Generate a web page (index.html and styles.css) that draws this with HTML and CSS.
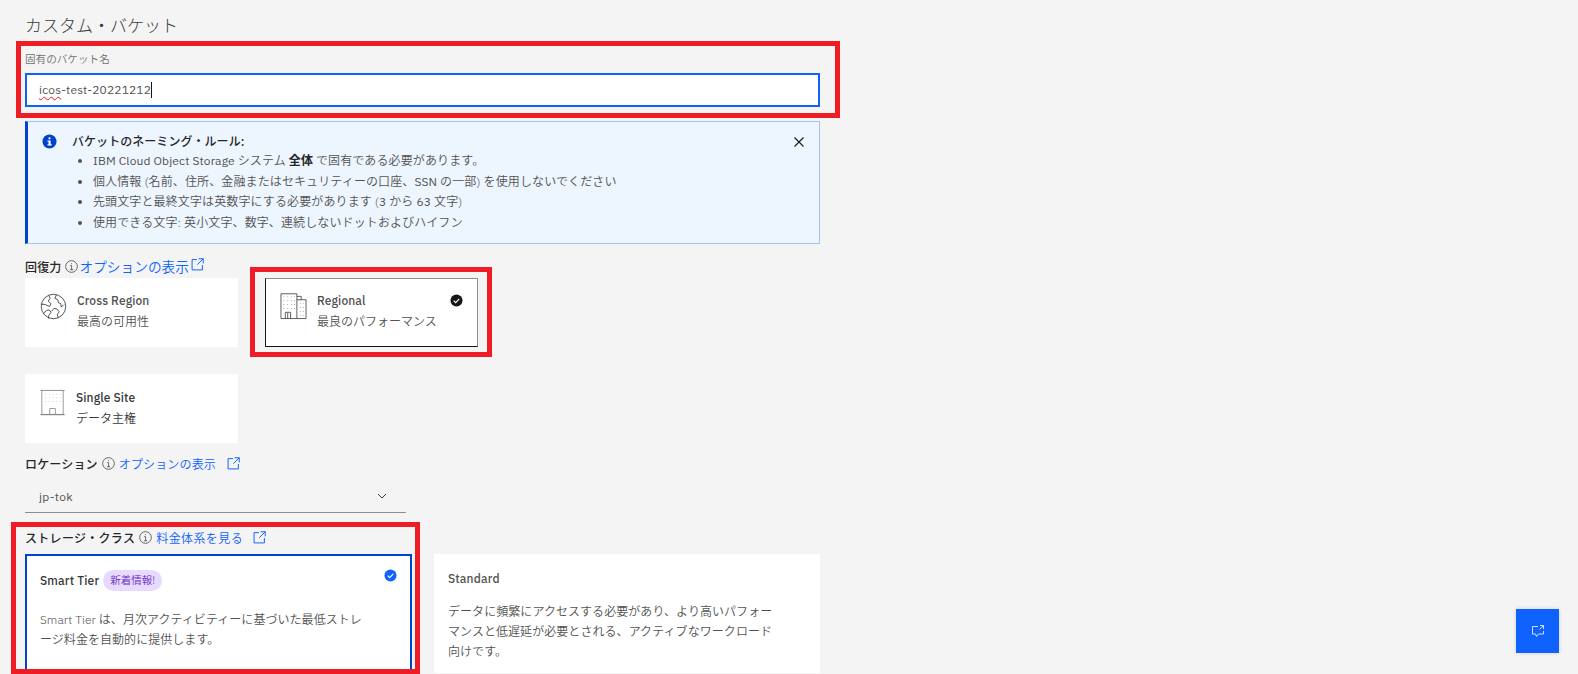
FILE: index.html
```html
<!DOCTYPE html>
<html lang="ja">
<head>
<meta charset="utf-8">
<title>カスタム・バケット</title>
<link rel="stylesheet" href="styles.css">
</head>
<body>
<main class="form">
  <h1 class="title">カスタム・バケット</h1>
  <label class="field-label">固有のバケット名</label>
  <div class="input"><span class="misspelt">icos</span>-test-20221212<span class="caret"></span></div>

  <section class="notice">
    <svg class="notice-icon" viewBox="0 0 16 16"><circle cx="8" cy="8" r="7.500" fill="#0043ce"/><rect x="7" y="7" width="2.200" height="5" fill="#fff"/><rect x="5.800" y="7" width="2" height="1.200" fill="#fff"/><rect x="5.800" y="11" width="4.600" height="1.200" fill="#fff"/><circle cx="8" cy="4.600" r="1.200" fill="#fff"/></svg>
    <div class="notice-body">
      <div class="notice-title">バケットのネーミング・ルール:</div>
      <ul class="rules">
        <li><span class="latin">IBM Cloud Object Storage</span> システム <b>全体</b> で固有である必要があります。</li>
        <li>個人情報 (名前、住所、金融またはセキュリティーの口座、<span class="latin">SSN</span> の一部) を使用しないでください</li>
        <li>先頭文字と最終文字は英数字にする必要があります (<span class="latin">3</span> から <span class="latin">63</span> 文字)</li>
        <li>使用できる文字: 英小文字、数字、連続しないドットおよびハイフン</li>
      </ul>
    </div>
    <svg class="notice-close" viewBox="0 0 12 12"><path d="M1.500 1.500l9 9M10.500 1.500l-9 9" stroke="#161616" stroke-width="1.100" fill="none"/></svg>
  </section>

  <div class="heading heading-resiliency">
    <b>回復力</b>
    <svg class="info" viewBox="0 0 12 12"><circle cx="6" cy="6" r="5.400"/><path d="M4.800 5.200H6.100V9M4.600 9H7.600M5.900 3v.9"/></svg>
    <a class="link link-large">オプションの表示</a>
    <svg class="launch launch-raised" viewBox="0 0 12 12"><path d="M5.500 1.500H1v9.500h9.500V6.500M7 .7h4.300V5M11.300.7L5.800 6.200"/></svg>
  </div>

  <div class="tiles">
    <div class="tile">
      <svg class="tile-icon" viewBox="0 0 28 28"><g fill="none" stroke="#262626" stroke-width=".8"><circle cx="14" cy="14" r="12.700"/><path d="M9 2.500l1.500 3-2 3 3 2.500-1.500 3-4.500-2-4.500-.5M3.500 21l3.500-3 2.500-.5 2 2.500-2.500 3.500 0 3M17 2l-1.500 3.500 3 1.500.5 3 2.500 1 .5 3.500 2-1.500 1-1M19 26l-1-4 2-2.500-2.500-3-3-.5-2.500 3"/></g></svg>
      <div class="tile-text">
        <div class="tile-name">Cross Region</div>
        <div class="tile-desc">最高の可用性</div>
      </div>
    </div>
    <div class="tile tile-selected">
      <svg class="tile-icon" viewBox="0 0 28 28"><g fill="none" stroke="#333" stroke-width=".8"><path d="M1 .8H17.500V26.500H1zM17.500 3.500H22V7M17.500 7H27V26.500H17.500M5.500 26.500V20H11V26.500M8 20.500V26.500"/></g><g fill="#666"><circle cx="4" cy="4" r=".5"/><circle cx="8" cy="4" r=".5"/><circle cx="12" cy="4" r=".5"/><circle cx="15" cy="4" r=".5"/><circle cx="4" cy="8" r=".5"/><circle cx="8" cy="8" r=".5"/><circle cx="12" cy="8" r=".5"/><circle cx="15" cy="8" r=".5"/><circle cx="4" cy="12" r=".5"/><circle cx="8" cy="12" r=".5"/><circle cx="12" cy="12" r=".5"/><circle cx="15" cy="12" r=".5"/><circle cx="4" cy="16" r=".5"/><circle cx="8" cy="16" r=".5"/><circle cx="12" cy="16" r=".5"/><circle cx="15" cy="16" r=".5"/><circle cx="21" cy="11" r=".5"/><circle cx="24" cy="11" r=".5"/><circle cx="21" cy="15" r=".5"/><circle cx="24" cy="15" r=".5"/><circle cx="21" cy="19" r=".5"/><circle cx="24" cy="19" r=".5"/><circle cx="21" cy="23" r=".5"/><circle cx="24" cy="23" r=".5"/></g></svg>
      <div class="tile-text">
        <div class="tile-name">Regional</div>
        <div class="tile-desc">最良のパフォーマンス</div>
      </div>
      <svg class="tile-check" viewBox="0 0 14 14"><circle cx="7" cy="7" r="6.500" fill="#161616"/><path d="M4 7.200l2.100 2.100L10 5.200" stroke="#fff" stroke-width="1.200" fill="none"/></svg>
    </div>
    <div class="tile">
      <svg class="tile-icon tile-icon-site" viewBox="0 0 28 28"><g fill="none" stroke="#888"><path d="M.5 1H26.500" stroke-width="1"/><path d="M2 1V27M25 1V27" stroke-width=".9"/><path d="M.5 27H26.500" stroke-width="1.400"/><path d="M10.500 27V20.500H16.500V27" stroke-width=".9"/></g><g fill="#aaa"><circle cx="6" cy="5" r=".5"/><circle cx="10" cy="5" r=".5"/><circle cx="14" cy="5" r=".5"/><circle cx="18" cy="5" r=".5"/><circle cx="22" cy="5" r=".5"/><circle cx="6" cy="9" r=".5"/><circle cx="10" cy="9" r=".5"/><circle cx="14" cy="9" r=".5"/><circle cx="18" cy="9" r=".5"/><circle cx="22" cy="9" r=".5"/><circle cx="6" cy="13" r=".5"/><circle cx="10" cy="13" r=".5"/><circle cx="14" cy="13" r=".5"/><circle cx="18" cy="13" r=".5"/><circle cx="22" cy="13" r=".5"/></g></svg>
      <div class="tile-text tile-text-site">
        <div class="tile-name tile-name-dark">Single Site</div>
        <div class="tile-desc tile-desc-dark">データ主権</div>
      </div>
    </div>
  </div>

  <div class="heading heading-location">
    <b>ロケーション</b>
    <svg class="info" viewBox="0 0 12 12"><circle cx="6" cy="6" r="5.400"/><path d="M4.800 5.200H6.100V9M4.600 9H7.600M5.900 3v.9"/></svg>
    <a class="link">オプションの表示</a>
    <svg class="launch launch-spaced" viewBox="0 0 12 12"><path d="M5.500 1.500H1v9.500h9.500V6.500M7 .7h4.300V5M11.300.7L5.800 6.200"/></svg>
  </div>

  <div class="select">
    <span class="latin">jp-tok</span>
    <svg class="chevron" viewBox="0 0 10 6"><path d="M1 1l4 4 4-4" fill="none" stroke="#262626" stroke-width=".9"/></svg>
  </div>

  <div class="heading heading-storage">
    <b>ストレージ・クラス</b>
    <svg class="info" viewBox="0 0 12 12"><circle cx="6" cy="6" r="5.400"/><path d="M4.800 5.200H6.100V9M4.600 9H7.600M5.900 3v.9"/></svg>
    <a class="link">料金体系を見る</a>
    <svg class="launch launch-storage" viewBox="0 0 12 12"><path d="M5.500 1.500H1v9.500h9.500V6.500M7 .7h4.300V5M11.300.7L5.800 6.200"/></svg>
  </div>

  <div class="plans">
    <div class="plan plan-selected">
      <div class="plan-head">
        <span class="plan-name">Smart Tier</span>
        <span class="badge">新着情報!</span>
      </div>
      <p class="plan-desc">Smart Tier は、月次アクティビティーに基づいた最低ストレージ料金を自動的に提供します。</p>
      <svg class="plan-check" viewBox="0 0 14 14"><circle cx="7" cy="7" r="6.500" fill="#0f62fe"/><path d="M4 7.200l2.100 2.100L10 5.200" stroke="#fff" stroke-width="1.200" fill="none"/></svg>
    </div>
    <div class="plan">
      <div class="plan-head">
        <span class="plan-name plan-name-plain">Standard</span>
      </div>
      <p class="plan-desc plan-desc-wide">データに頻繁にアクセスする必要があり、より高いパフォーマンスと低遅延が必要とされる、アクティブなワークロード向けです。</p>
    </div>
  </div>
</main>

<div class="mark mark-name"></div>
<div class="mark mark-regional"></div>
<div class="mark mark-storage"></div>

<button class="fab" aria-label="フィードバック">
  <svg viewBox="0 0 14 14"><path d="M7 2.500H1.500V10H4.500L5.500 12.500L7.500 10H12.500V7" fill="none" stroke="#cfe0ff" stroke-width="1"/><path d="M9 1.500h3.500V5M12.500 1.500L8.500 5.500" fill="none" stroke="#cfe0ff" stroke-width="1"/></svg>
</button>
</body>
</html>
```
FILE: styles.css
```css
* { box-sizing: border-box; }
html, body { margin: 0; height: 674px; overflow: hidden; background: #f4f4f4; }
body {
  position: relative;
  font-family: "IBM Plex Sans", "Roboto", "Noto Sans CJK JP", sans-serif;
  font-size: 12px;
  font-weight: 350;
  color: #525252;
}
.latin { font-weight: 400; }
.form { width: 795px; margin-left: 25px; padding-top: 14px; }
.title { margin: 0; font-size: 17px; font-weight: 300; line-height: 24px; color: #393939; }
.field-label { display: block; margin-top: 13px; font-size: 10.600px; line-height: 16px; color: #6f6f6f; }
.input {
  height: 34px; margin-top: 6px; padding-left: 12px;
  background: #fff; border: 2px solid #0f62fe;
  font-size: 12px; font-weight: 400; letter-spacing: .16px; line-height: 30px; color: #525252;
  display: flex; align-items: center;
}
.misspelt { text-decoration: underline wavy #da1e28 1px; text-underline-offset: 2px; }
.caret { width: 1px; height: 16px; background: #161616; }
.notice {
  height: 123px; margin-top: 14px; padding: 11px 14px 0 14px;
  display: flex; background: #edf5ff;
  border: 1px solid #a6c2f0; border-left: 3px solid #0043ce;
}
.notice-icon { width: 15px; height: 15px; flex: none; margin-top: 1px; }
.notice-body { flex: 1; margin-left: 15px; }
.notice-title { font-weight: 500; line-height: 18px; color: #262626; letter-spacing: .05px; }
.rules { margin: 0; padding: 0 0 0 21px; line-height: 20.500px; color: #525252; letter-spacing: .12px; }
.rules b { font-weight: 700; color: #262626; }
.notice-close { width: 12px; height: 12px; flex: none; margin-top: 3px; }
.heading { display: flex; align-items: center; height: 18px; color: #262626; letter-spacing: .16px; }
.heading b { font-weight: 500; font-size: 12px; }
.heading-resiliency { margin-top: 13px; }
.heading-location { margin-top: 11px; }
.heading-storage { margin-top: 15px; }
.heading-storage b { letter-spacing: .3px; }
.heading-storage .link { letter-spacing: .4px; }
.info { width: 13px; height: 13px; margin-left: 4px; fill: none; stroke: #525252; stroke-width: .8; }
.link { margin-left: 4px; color: #0f62fe; font-size: 12px; }
.link-large { margin-left: 1px; font-size: 13.700px; letter-spacing: 0; }
.launch { width: 13px; height: 13px; margin-left: 11px; fill: none; stroke: #0f62fe; stroke-width: .9; }
.launch-raised { margin-left: 2px; margin-top: -4px; }
.launch-storage { margin-left: 10px; }
.tiles { display: grid; grid-template-columns: 213px 213px; column-gap: 27px; row-gap: 27px; margin-top: 3px; }
.tile { height: 69px; background: #fff; display: flex; padding: 15px 15px 0; position: relative; }
.tile-selected { border: 1px solid #161616; border-top-color: #8d8d8d; border-right-color: #8d8d8d; padding: 14px 12px 0 14px; }
.tile-icon { width: 27px; height: 27px; flex: none; }
.tile-icon-site { width: 26px; }
.tile-text { margin-left: 10px; }
.tile-text-site { padding-top: 1px; }
.tile-name { font-weight: 500; font-size: 12px; line-height: 16px; letter-spacing: .1px; color: #525252; }
.tile-desc { margin-top: 4px; font-size: 12px; line-height: 18px; color: #525252; }
.tile-name-dark, .tile-desc-dark { color: #393939; }
.tile-check { position: absolute; top: 15px; right: 14px; width: 13px; height: 13px; }
.select {
  height: 35px; width: 381px; margin-top: 6px; padding: 2px 16px 0 14px;
  display: flex; align-items: center; justify-content: space-between;
  border-bottom: 1px solid #8d8d8d; color: #525252; letter-spacing: .32px;
}
.chevron { width: 10px; height: 6px; margin-right: 3px; }
.plans { display: grid; grid-template-columns: 387px 386px; column-gap: 22px; margin-top: 8px; }
.plan { height: 119px; padding: 14px 14px 0; background: #fff; position: relative; }
.plan-selected { border: 2px solid #0043ce; padding: 14px 13px 0; }
.plan-head { display: flex; align-items: center; height: 20px; }
.plan-name { font-weight: 500; color: #393939; font-size: 12px; letter-spacing: .16px; }
.plan-name-plain { color: #525252; }
.badge {
  margin-left: 4px; padding: 0 7px; height: 21px; border-radius: 11px;
  background: #e8daff; color: #6929c4; font-size: 10.500px; line-height: 21px; letter-spacing: 0;
}
.plan-desc { margin: 20px 0 0; width: 328px; line-height: 20px; color: #525252; letter-spacing: .05px; }
.plan-desc-wide { margin-top: 14px; width: 336px; letter-spacing: .06px; }
.plan-check { position: absolute; top: 13px; right: 13px; width: 13px; height: 13px; }
.mark { position: absolute; border: 5px solid #ee1c25; }
.mark-name { left: 16px; top: 41px; width: 824px; height: 77px; }
.mark-regional { left: 250px; top: 267px; width: 242px; height: 90px; }
.mark-storage { left: 11px; top: 522px; width: 409px; height: 152px; }
.fab {
  position: absolute; left: 1516px; top: 609px; width: 43px; height: 44px;
  padding: 0; border: 0; background: #0f62fe;
  display: flex; align-items: center; justify-content: center;
  box-shadow: 0 0 4px rgba(0,0,0,.15);
}
.fab svg { width: 14px; height: 14px; }
```
